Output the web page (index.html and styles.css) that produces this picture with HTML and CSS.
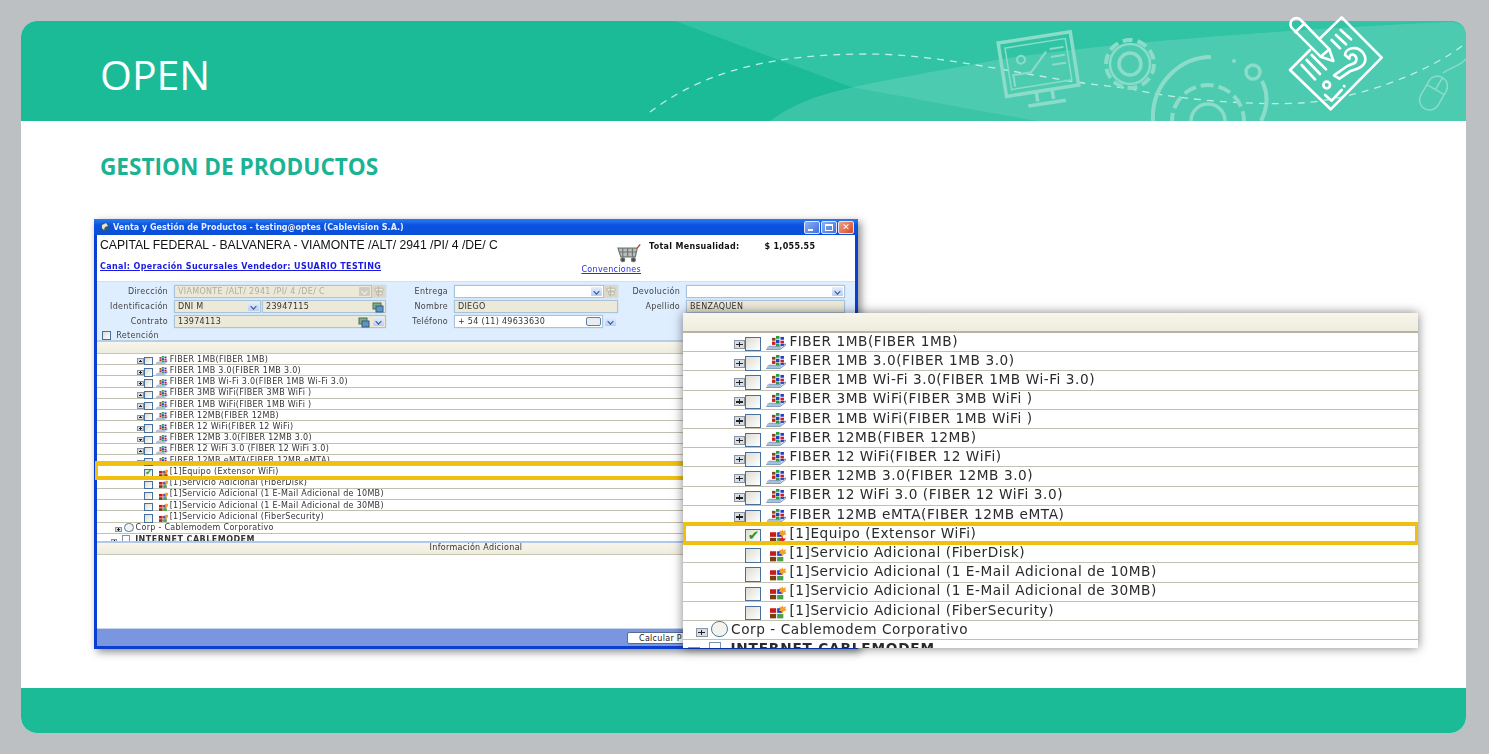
FILE: index.html
```html
<!DOCTYPE html>
<html lang="es">
<head>
  <meta charset="UTF-8" />
  <title>OPEN - Gestion de productos</title>
  <link rel="stylesheet" href="styles.css">
</head>
<body>

  <svg class="defs" width="0" height="0">
    <symbol id="ico-prod" viewBox="0 0 20 15" preserveAspectRatio="none">
      <path d="M0.500 14.500 L14 14.500 L19.500 10 L19.500 8.500 L14 11 L3 11 Z" fill="#dbe6f2" stroke="#6d8db5" stroke-width="1"/>
      <rect x="1" y="11.500" width="14" height="2.500" fill="#a9c0dc"/>
      <rect x="6" y="2" width="3.500" height="3" fill="#7a4a20"/>
      <rect x="10" y="0" width="3.500" height="3" fill="#2f9a3a"/>
      <rect x="14.500" y="1" width="3.500" height="3" fill="#2440c8"/>
      <rect x="6" y="6" width="3.500" height="3.500" fill="#c82020"/>
      <rect x="10" y="4" width="3.500" height="3.500" fill="#2440c8"/>
      <rect x="14.500" y="5" width="3.500" height="3" fill="#c82020"/>
      <rect x="10" y="8" width="3.500" height="3" fill="#2f9a3a"/>
      <rect x="14.500" y="8.500" width="3.500" height="2" fill="#2440c8"/>
    </symbol>
    <symbol id="ico-sub" viewBox="0 0 16 13">
      <rect x="0" y="3" width="6" height="4.500" fill="#c81c1c"/>
      <rect x="7" y="3" width="5" height="4.500" fill="#2440c8"/>
      <rect x="0" y="8.500" width="6" height="4.500" fill="#7a3e14"/>
      <rect x="7" y="8.500" width="6" height="4.500" fill="#4aa04a"/>
      <path d="M12 0 L13 2 L15.500 1 L15 3.500 L16 5.500 L13.500 5.800 L12 8 L10.800 5.800 L8.500 5.500 L10 3.500 L9 1 L11 2 Z" fill="#f5a02a"/>
    </symbol>
    <symbol id="ico-sub-on" viewBox="0 0 16 13">
      <rect x="0" y="3" width="6" height="4.500" fill="#c81c1c"/>
      <rect x="7" y="3" width="5" height="4.500" fill="#2440c8"/>
      <rect x="0" y="8.500" width="6" height="4.500" fill="#7a3e14"/>
      <rect x="7" y="8.500" width="6" height="4.500" fill="#4aa04a"/>
      <path d="M12 0 L13 2 L15.500 1 L15 3.500 L16 5.500 L13.500 5.800 L12 8 L10.800 5.800 L8.500 5.500 L10 3.500 L9 1 L11 2 Z" fill="#f5a02a"/>
      <path d="M12 7 L13 9 L16 9 L14 10.700 L15 13 L12 11.800 L9.500 13 L10.300 10.700 L8.500 9 L11 9 Z" fill="#f01818"/>
    </symbol>
    <symbol id="ico-money" viewBox="0 0 12 12">
      <rect x="1" y="2" width="8" height="6" fill="#7fae8e" stroke="#44705a"/>
      <rect x="4" y="5" width="7" height="6" fill="#5f93c2" stroke="#35587a"/>
    </symbol>
    <symbol id="ico-post" viewBox="0 0 15 13">
      <path d="M7 1 V12 M3 3 H11 L13 4.500 L11 6 H3 Z M5 7 H11 V10 H5 Z" fill="#eeecdf" stroke="#b8b6a8" stroke-width="1"/>
    </symbol>
  </svg>

  <div class="slide">
    <header class="banner">
      <svg class="banner-art" viewBox="0 0 845 100" width="845" height="100" fill="none">
        <!-- coordinates are page x - 621, page y - 21 -->
        <path d="M54 0 L829 0 Q845 0 845 16 L845 100 L417 100 C330 85 280 75 230 66 Z" fill="#30c3a4"/>
        <path d="M149 100 C190 70 230 66 365 41 C470 22 680 8 826 1 Q845 0 845 16 L845 100 Z" fill="#fff" fill-opacity=".14"/>
        <path d="M29 91 C70 60 130 33 246 33 C330 33 420 60 506 67 C570 82 650 84 680 82 C740 78 810 50 845 22" stroke="#bfeee2" stroke-width="1.300" stroke-dasharray="7 6"/>
        <g stroke="#8bdcc8" stroke-width="3.500">
          <g transform="rotate(-9 418 50)">
            <rect x="382" y="16" width="73" height="54"/>
            <rect x="388" y="22" width="61" height="42" stroke-width="1.500"/>
            <path d="M412 70 V80 M428 70 V80 M402 83 H440" />
            <circle cx="402" cy="36" r="4" stroke-width="2"/>
            <path d="M392 62 V50 H410 L428 32 M432 30 H446 M432 38 H446 M432 46 H446" stroke-width="2"/>
          </g>
          <circle cx="509" cy="43" r="11"/>
          <circle cx="509" cy="43" r="20" stroke-width="2.500"/>
          <circle cx="509" cy="43" r="24" stroke-dasharray="10 5" stroke-width="4"/>
          <path d="M532 100 C530 62 560 36 590 36 M640 100 C648 84 646 70 641 60" stroke-width="4"/>
          <circle cx="632" cy="51" r="7"/>
          <circle cx="613" cy="40" r="2" fill="#8bdcc8" stroke="none"/>
          <circle cx="587" cy="100" r="36" stroke-dasharray="13 5" stroke-width="4"/>
          <circle cx="587" cy="100" r="17"/>
          <g transform="rotate(30 812 73)" stroke-width="1.500">
            <rect x="802" y="54" width="20" height="36" rx="10"/>
            <path d="M802 68 H822 M812 54 V68"/>
          </g>
          <path d="M822 52 C830 46 838 46 845 38" stroke-width="1.500"/>
        </g>
      </svg>
      <h1 class="banner-title">OPEN</h1>
      <svg class="banner-icon" viewBox="0 0 390 315" width="130" height="105" fill="none" stroke="#fff" stroke-width="8" stroke-linecap="round" stroke-linejoin="round">
        <path d="M150 85 L215 22 L335 143 L182 298 L60 180 L120 120"/>
        <path d="M64 52 A18 18 0 0 1 95 33 L178 118 L190 153 L152 140 Z"/>
        <path d="M76 66 L104 40 M152 140 L178 118"/>
        <path d="M185 90 L210 115 M198 75 L228 103 M212 60 L243 88"/>
        <path d="M125 135 L168 178 M110 150 L150 192 M95 165 L135 208"/>
        <path d="M225 135 C225 115 262 103 280 130 C295 152 280 170 262 176 L240 184 L208 206 L192 196 L232 168 L252 160 C262 154 262 138 250 134 C242 132 238 138 238 146 Z"/>
        <circle cx="170" cy="225" r="10"/>
        <path d="M165 255 L185 272 L215 240 M222 228 L223 229"/>
      </svg>
    </header>

    <main class="content">
      <h2 class="section-title">GESTION DE PRODUCTOS</h2>

      <div class="win">
        <div class="win-title">
          <svg class="win-globe" viewBox="0 0 10 10" width="10" height="10">
            <circle cx="5" cy="5" r="4.500" fill="#2b5a8a"/>
            <path d="M2 3 L6 1 L8 4 L5 5 L4 8 L2 6 Z" fill="#e8e4c8"/>
          </svg>
          <span class="win-name">Venta y Gestión de Productos - testing@optes (Cablevision S.A.)</span>
          <span class="win-btns">
            <span class="win-btn"><i class="b-min"></i></span>
            <span class="win-btn"><i class="b-max"></i></span>
            <span class="win-btn close">&#10005;</span>
          </span>
        </div>

        <div class="win-head">
          <div class="head-left">
            <div class="address">CAPITAL FEDERAL - BALVANERA - VIAMONTE /ALT/ 2941 /PI/ 4 /DE/ C</div>
            <a class="channel">Canal: Operación Sucursales Vendedor: USUARIO TESTING</a>
          </div>
          <div class="cart-box">
            <svg class="cart" viewBox="0 0 28 20" width="27" height="20" fill="none" stroke="#6f7570" stroke-width="1.200">
              <path d="M1 5 H21 L19 14 H4 Z" fill="#b9bdb8"/>
              <path d="M21 5 L24 1" stroke="#c8402a" stroke-width="1.500"/>
              <path d="M6 5 V14 M11 5 V14 M16 5 V14 M2 9 H20"/>
              <circle cx="6" cy="17" r="2" fill="#444"/>
              <circle cx="17" cy="17" r="2" fill="#444"/>
            </svg>
            <a class="conv">Convenciones</a>
          </div>
          <div class="total">
            <b>Total Mensualidad:</b>
            <b>$ 1,055.55</b>
          </div>
        </div>

        <div class="form">
          <label>Dirección</label>
          <div class="field off gray">VIAMONTE /ALT/ 2941 /PI/ 4 /DE/ C<span class="drop dim"></span><svg class="tool"><use href="#ico-post"/></svg></div>
          <label>Entrega</label>
          <div class="field"><span class="drop"></span><svg class="tool"><use href="#ico-post"/></svg></div>
          <label>Devolución</label>
          <div class="field"><span class="drop"></span></div>

          <label>Identificación</label>
          <div class="field-pair">
            <div class="field off doc">DNI M<span class="drop"></span></div>
            <div class="field off wide">23947115<svg class="money"><use href="#ico-money"/></svg></div>
          </div>
          <label>Nombre</label>
          <div class="field off">DIEGO</div>
          <label>Apellido</label>
          <div class="field off">BENZAQUEN</div>

          <label>Contrato</label>
          <div class="field off">13974113<svg class="money"><use href="#ico-money"/></svg><span class="drop"></span></div>
          <label>Teléfono</label>
          <div class="field-pair">
            <div class="field wide">+ 54 (11) 49633630<span class="phone-btn"></span></div>
            <span class="drop alone"></span>
          </div>
          <span></span>
          <span></span>

          <div class="retention"><span class="check"></span>Retención</div>
        </div>

        <div class="strip"></div>

        <div class="tree tree-sm">
          <div class="row"><span class="plus"></span><span class="check"></span><svg class="ico"><use href="#ico-prod"/></svg>FIBER 1MB(FIBER 1MB)</div>
          <div class="row"><span class="plus"></span><span class="check"></span><svg class="ico"><use href="#ico-prod"/></svg>FIBER 1MB 3.0(FIBER 1MB 3.0)</div>
          <div class="row"><span class="plus"></span><span class="check"></span><svg class="ico"><use href="#ico-prod"/></svg>FIBER 1MB Wi-Fi 3.0(FIBER 1MB Wi-Fi 3.0)</div>
          <div class="row"><span class="plus"></span><span class="check"></span><svg class="ico"><use href="#ico-prod"/></svg>FIBER 3MB WiFi(FIBER 3MB WiFi )</div>
          <div class="row"><span class="plus"></span><span class="check"></span><svg class="ico"><use href="#ico-prod"/></svg>FIBER 1MB WiFi(FIBER 1MB WiFi )</div>
          <div class="row"><span class="plus"></span><span class="check"></span><svg class="ico"><use href="#ico-prod"/></svg>FIBER 12MB(FIBER 12MB)</div>
          <div class="row"><span class="plus"></span><span class="check"></span><svg class="ico"><use href="#ico-prod"/></svg>FIBER 12 WiFi(FIBER 12 WiFi)</div>
          <div class="row"><span class="plus"></span><span class="check"></span><svg class="ico"><use href="#ico-prod"/></svg>FIBER 12MB 3.0(FIBER 12MB 3.0)</div>
          <div class="row"><span class="plus"></span><span class="check"></span><svg class="ico"><use href="#ico-prod"/></svg>FIBER 12 WiFi 3.0 (FIBER 12 WiFi 3.0)</div>
          <div class="row"><span class="plus"></span><span class="check"></span><svg class="ico"><use href="#ico-prod"/></svg>FIBER 12MB eMTA(FIBER 12MB eMTA)</div>
          <div class="row picked"><span class="plus none"></span><span class="check on">&#10004;</span><svg class="ico sub"><use href="#ico-sub-on"/></svg>[1]Equipo (Extensor WiFi)</div>
          <div class="row"><span class="plus none"></span><span class="check"></span><svg class="ico sub"><use href="#ico-sub"/></svg>[1]Servicio Adicional (FiberDisk)</div>
          <div class="row"><span class="plus none"></span><span class="check"></span><svg class="ico sub"><use href="#ico-sub"/></svg>[1]Servicio Adicional (1 E-Mail Adicional de 10MB)</div>
          <div class="row"><span class="plus none"></span><span class="check"></span><svg class="ico sub"><use href="#ico-sub"/></svg>[1]Servicio Adicional (1 E-Mail Adicional de 30MB)</div>
          <div class="row"><span class="plus none"></span><span class="check"></span><svg class="ico sub"><use href="#ico-sub"/></svg>[1]Servicio Adicional (FiberSecurity)</div>
          <div class="row lvl1"><span class="plus"></span><span class="radio"></span>Corp - Cablemodem Corporativo</div>
          <div class="row lvl0"><span class="plus"></span><span class="doc-ico"></span>INTERNET CABLEMODEM</div>
        </div>

        <div class="strip info">Información Adicional</div>
        <div class="info-body"></div>
        <div class="win-foot"><button class="calc">Calcular P</button></div>
      </div>

      <div class="zoom-panel">
        <div class="zoom-strip"></div>
        <div class="tree tree-lg">
          <div class="row"><span class="plus"></span><span class="check"></span><svg class="ico"><use href="#ico-prod"/></svg>FIBER 1MB(FIBER 1MB)</div>
          <div class="row"><span class="plus"></span><span class="check"></span><svg class="ico"><use href="#ico-prod"/></svg>FIBER 1MB 3.0(FIBER 1MB 3.0)</div>
          <div class="row"><span class="plus"></span><span class="check"></span><svg class="ico"><use href="#ico-prod"/></svg>FIBER 1MB Wi-Fi 3.0(FIBER 1MB Wi-Fi 3.0)</div>
          <div class="row"><span class="plus"></span><span class="check"></span><svg class="ico"><use href="#ico-prod"/></svg>FIBER 3MB WiFi(FIBER 3MB WiFi )</div>
          <div class="row"><span class="plus"></span><span class="check"></span><svg class="ico"><use href="#ico-prod"/></svg>FIBER 1MB WiFi(FIBER 1MB WiFi )</div>
          <div class="row"><span class="plus"></span><span class="check"></span><svg class="ico"><use href="#ico-prod"/></svg>FIBER 12MB(FIBER 12MB)</div>
          <div class="row"><span class="plus"></span><span class="check"></span><svg class="ico"><use href="#ico-prod"/></svg>FIBER 12 WiFi(FIBER 12 WiFi)</div>
          <div class="row"><span class="plus"></span><span class="check"></span><svg class="ico"><use href="#ico-prod"/></svg>FIBER 12MB 3.0(FIBER 12MB 3.0)</div>
          <div class="row"><span class="plus"></span><span class="check"></span><svg class="ico"><use href="#ico-prod"/></svg>FIBER 12 WiFi 3.0 (FIBER 12 WiFi 3.0)</div>
          <div class="row"><span class="plus"></span><span class="check"></span><svg class="ico"><use href="#ico-prod"/></svg>FIBER 12MB eMTA(FIBER 12MB eMTA)</div>
          <div class="row picked"><span class="plus none"></span><span class="check on">&#10004;</span><svg class="ico sub"><use href="#ico-sub-on"/></svg>[1]Equipo (Extensor WiFi)</div>
          <div class="row"><span class="plus none"></span><span class="check"></span><svg class="ico sub"><use href="#ico-sub"/></svg>[1]Servicio Adicional (FiberDisk)</div>
          <div class="row"><span class="plus none"></span><span class="check"></span><svg class="ico sub"><use href="#ico-sub"/></svg>[1]Servicio Adicional (1 E-Mail Adicional de 10MB)</div>
          <div class="row"><span class="plus none"></span><span class="check"></span><svg class="ico sub"><use href="#ico-sub"/></svg>[1]Servicio Adicional (1 E-Mail Adicional de 30MB)</div>
          <div class="row"><span class="plus none"></span><span class="check"></span><svg class="ico sub"><use href="#ico-sub"/></svg>[1]Servicio Adicional (FiberSecurity)</div>
          <div class="row lvl1"><span class="plus"></span><span class="radio"></span>Corp - Cablemodem Corporativo</div>
          <div class="row lvl0"><span class="plus"></span><span class="doc-ico"></span>INTERNET CABLEMODEM</div>
        </div>
      </div>
    </main>

    <footer class="bottom"></footer>
  </div>

</body>
</html>
```

FILE: styles.css
```css
* {
  box-sizing: border-box;
}
html, body {
  height: 100%;
}
body {
  margin: 0;
  padding: 21px 23px 21px 21px;
  background: #bcc0c3;
  font-family: "DejaVu Sans", sans-serif;
  overflow: hidden;
}
.defs {
  display: block;
  height: 0;
}

/* slide */
.slide {
  height: 712px;
  background: #fff;
  border-radius: 16px;
  display: flex;
  flex-direction: column;
  position: relative;
}
.banner {
  height: 100px;
  flex: none;
  background: #1bbb98;
  border-radius: 16px 16px 0 0;
  position: relative;
  display: flex;
  align-items: center;
  padding: 5px 0 0 79px;
}
.banner-art {
  position: absolute;
  left: 600px;
  top: 0;
}
.banner-title {
  margin: 0;
  font-family: "Open Sans", sans-serif;
  font-weight: 400;
  font-size: 41px;
  color: #fff;
  position: relative;
}
.banner-icon {
  position: absolute;
  left: 1249px;
  top: -11px;
}
.content {
  flex: 1;
  position: relative;
  padding: 31px 0 0 73px;
}
.section-title {
  margin: 0 0 37px 6px;
  font-family: "Open Sans", sans-serif;
  font-weight: 700;
  font-size: 22.6px;
  line-height: 30px;
  color: #1bb394;
}
.bottom {
  height: 45px;
  flex: none;
  background: #1bbb98;
  border-radius: 0 0 16px 16px;
}

/* main window */
.win {
  width: 764px;
  height: 430px;
  background: #fff;
  border: 3px solid #0b3fd0;
  border-top: 0;
  box-shadow: 3px 3px 8px rgba(0, 0, 0, .45);
  display: flex;
  flex-direction: column;
  filter: blur(.3px);
  font-size: 8px;
  letter-spacing: .3px;
  color: #333;
}
.win-title {
  height: 16px;
  margin: 0 -3px;
  padding: 0 4px 0 6px;
  background: linear-gradient(#2a7cf2, #0a52e0 40%, #0a4fd8);
  color: #e8f0ff;
  display: flex;
  align-items: center;
  gap: 3px;
  font-weight: 700;
  letter-spacing: 0;
  flex: none;
}
.win-name {
  flex: 1;
}
.win-btns {
  display: flex;
  gap: 1px;
}
.win-btn {
  width: 16px;
  height: 13px;
  background: linear-gradient(135deg, #8fb0f2, #3f6fe0);
  border: 1px solid #dfe8ff;
  border-radius: 2px;
  position: relative;
  display: block;
  color: #fff;
  font-size: 9px;
  line-height: 11px;
  text-align: center;
}
.win-btn.close {
  background: linear-gradient(135deg, #f0a088, #d8481e);
}
.b-min {
  position: absolute;
  left: 3px;
  bottom: 2px;
  width: 5px;
  height: 2px;
  background: #fff;
}
.b-max {
  position: absolute;
  left: 3px;
  top: 2px;
  width: 8px;
  height: 7px;
  border: 1px solid #fff;
  border-top-width: 2px;
}
.win-head {
  height: 47px;
  flex: none;
  display: flex;
  border-bottom: 1px solid #f7d9b8;
  padding-left: 3px;
}
.head-left {
  width: 481px;
  padding-top: 4px;
}
.address {
  font-family: "Liberation Sans", sans-serif;
  font-size: 12.2px;
  letter-spacing: 0;
  line-height: 13px;
  color: #111;
  white-space: nowrap;
}
.channel {
  display: block;
  margin-top: 10px;
  font-weight: 700;
  letter-spacing: .35px;
  line-height: 10px;
  color: #1a1ae0;
  text-decoration: underline;
  white-space: nowrap;
}
.cart-box {
  width: 60px;
  display: flex;
  flex-direction: column;
  align-items: flex-end;
  padding-top: 8px;
}
.cart {
  flex: none;
  margin-right: -3px;
}
.conv {
  margin-top: 2px;
  line-height: 10px;
  color: #2a2ae0;
  text-decoration: underline;
  white-space: nowrap;
}
.total {
  display: flex;
  gap: 25px;
  padding: 7px 0 0 8px;
  color: #111;
  white-space: nowrap;
}
.form {
  height: 60px;
  flex: none;
  background: #dfeeff;
  border-bottom: 2px solid #b8d0e4;
  padding-top: 3px;
  display: grid;
  grid-template-columns: 71px 212px 56px 164px 56px 159px;
  grid-auto-rows: 13px;
  gap: 2px 6px;
}
.form label {
  text-align: right;
  line-height: 13px;
  color: #444;
  white-space: nowrap;
}
.field {
  border: 1px solid #a9c3d8;
  box-shadow: 0 0 1px #a9c3d8;
  background: #fff;
  display: flex;
  align-items: center;
  padding-left: 3px;
  color: #333;
  white-space: nowrap;
  min-width: 0;
}
.field.off {
  background: #ece9d8;
}
.field.gray {
  color: #b0ad9f;
}
.field-pair {
  display: flex;
  gap: 1px;
  align-items: center;
}
.field-pair .field {
  height: 13px;
}
.doc {
  width: 87px;
  flex: none;
}
.wide {
  flex: 1;
}
.drop {
  width: 11px;
  height: 9px;
  margin-left: auto;
  margin-right: 1px;
  flex: none;
  background: linear-gradient(#e6eefc, #b9cdf2);
  border-radius: 1px;
  position: relative;
}
.drop::after {
  content: "";
  position: absolute;
  left: 3px;
  top: 2px;
  width: 4px;
  height: 4px;
  border: solid #2b4a8a;
  border-width: 0 1px 1px 0;
  transform: rotate(45deg) scale(.9);
}
.drop.dim {
  background: #cfcdc2;
}
.drop.dim::after {
  border-color: #f4f2e8;
}
.drop.alone {
  margin: 0 2px 0 1px;
}
.money + .drop {
  margin-left: 2px;
}
.tool {
  width: 15px;
  height: 13px;
  margin-right: -1px;
  flex: none;
  background: #dcd9ca;
  border-left: 1px solid #c2c0b2;
}
.money {
  width: 12px;
  height: 12px;
  margin-left: auto;
  margin-right: 1px;
  flex: none;
}
.phone-btn {
  width: 15px;
  height: 9px;
  margin-left: auto;
  margin-right: 1px;
  flex: none;
  border: 1px solid #5f82a8;
  border-radius: 2px;
  background: #e9edf2;
}
.retention {
  grid-column: 1 / -1;
  height: 10px;
  padding-left: 5px;
  display: flex;
  align-items: center;
  gap: 5px;
  color: #444;
}
.retention .check {
  margin: 0;
  height: 9px;
}
.strip {
  height: 12px;
  flex: none;
  background: linear-gradient(#f8f6ec, #eeecdd);
  border-bottom: 1px solid #c8c6b4;
}
.strip.info {
  border-top: 2px solid #b0c8ec;
  text-align: center;
  line-height: 9px;
  height: 14px;
  color: #333;
}
.info-body {
  flex: 1;
  border-bottom: 1px solid #c6d4f0;
}
.win-foot {
  height: 17px;
  flex: none;
  background: #7a96de;
  padding: 3px 0 0 530px;
  overflow: hidden;
}
.calc {
  display: block;
  width: 90px;
  height: 12px;
  padding: 0 0 0 11px;
  font: 8px "DejaVu Sans", sans-serif;
  letter-spacing: .3px;
  color: #222;
  text-align: left;
  background: #fff;
  border: 1px solid #5a6a90;
  border-radius: 2px;
}

/* product tree, same markup at two sizes */
.tree {
  flex: none;
}
.tree-sm {
  --base: 18px;
  --lift: 0;
  font-size: 8px;
  letter-spacing: .3px;
  height: 187px;
  color: #333;
  clip-path: inset(0 0 0 -4px);
}
.tree-lg {
  --base: 13px;
  --lift: .2em;
  font-size: 13.66px;
  letter-spacing: .55px;
  height: 315px;
  color: #2a2a2a;
}
.row {
  height: 1.406em;
  display: flex;
  align-items: center;
  padding-left: calc(var(--base) + 2.75em);
  padding-bottom: var(--lift);
  white-space: nowrap;
  border-bottom: .13em solid #c2c0b1;
}
.row.lvl1 {
  padding-left: var(--base);
}
.row.lvl0 {
  padding-left: calc(var(--base) - .55em);
  font-weight: 700;
  border-bottom: 0;
  letter-spacing: .06em;
}
.plus {
  width: .85em;
  height: .68em;
  flex: none;
  margin-right: .02em;
  margin-top: .5em;
  background: #d8dde6;
  border: .07em solid #8a93a0;
  position: relative;
}
.plus::before, .plus::after {
  content: "";
  position: absolute;
  background: #222;
}
.plus::before {
  left: 15%;
  right: 15%;
  top: 42%;
  height: .1em;
}
.plus::after {
  top: 15%;
  bottom: 15%;
  left: 42%;
  width: .1em;
}
.plus.none {
  visibility: hidden;
}
.check {
  width: 1.17em;
  height: 1.05em;
  flex: none;
  margin-top: .5em;
  background: linear-gradient(135deg, #dedcd2, #fff);
  border: .14em solid #47709a;
  color: #1e9a2c;
  line-height: .8em;
  letter-spacing: 0;
  text-align: center;
  display: inline-block;
}
.radio {
  width: 1.2em;
  height: 1.2em;
  flex: none;
  margin: 0 .25em 0 .25em;
  border: .1em solid #4f7ba8;
  border-radius: 50%;
  background: #f4f4ee;
}
.doc-ico {
  width: .9em;
  height: 1em;
  margin: 0 .7em 0 .6em;
  flex: none;
  border: .08em solid #7f93ad;
}
.ico {
  width: 1.46em;
  height: 1.03em;
  flex: none;
  margin: .3em .22em 0 .37em;
}
.ico.sub {
  width: 1.2em;
  height: 1em;
  margin: .4em .2em 0 .65em;
}
.row.picked {
  position: relative;
  z-index: 1;
  background: #fff;
}
.row.picked::after {
  content: "";
  position: absolute;
  border: 3px solid #f0c010;
}
.tree-sm .picked::after {
  inset: -5px -2px -3px -2px;
  border-width: 4px 3px;
}
.tree-lg .picked::after {
  inset: -3px 0 -2px 0;
  border-width: 4px 3px;
}

/* zoomed crop lying over the window */
.zoom-panel {
  position: absolute;
  left: 662px;
  top: 192px;
  width: 735px;
  height: 335px;
  background: #fff;
  overflow: hidden;
  box-shadow: 0 0 10px rgba(0, 0, 0, .5);
  filter: blur(.3px);
}
.zoom-strip {
  height: 20px;
  background: linear-gradient(#f8f6ec, #eeecdd);
  border-bottom: 2px solid #b5b3a3;
}
```
